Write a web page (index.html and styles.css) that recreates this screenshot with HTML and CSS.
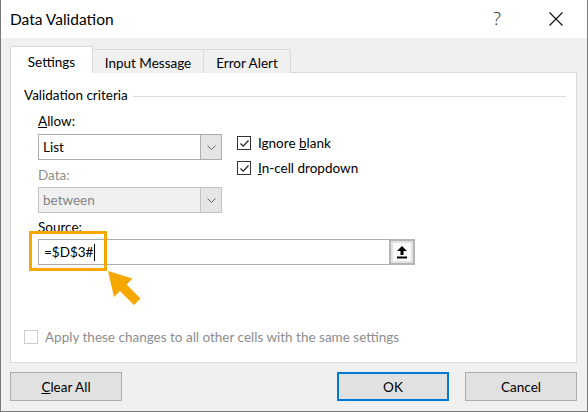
FILE: index.html
```html
<!DOCTYPE html>
<html lang="en">
<head>
<meta charset="UTF-8">
<meta name="viewport" content="width=device-width, initial-scale=1.0">
<title>Data Validation</title>
<link rel="stylesheet" href="styles.css">
</head>
<body>

<div class="dialog">
    <div class="titlebar">
        <span class="title">Data Validation</span>
        <span class="help">?</span>
        <span class="close">
            <svg width="14" height="14" viewBox="0 0 14 14"><path d="M0.5 0.5L13.5 13.5M13.5 0.5L0.5 13.5" stroke="#111" stroke-width="1.2"/></svg>
        </span>
    </div>

    <div class="body">
        <div class="tabs">
            <div class="tab active">Settings</div>
            <div class="tab">Input Message</div>
            <div class="tab">Error Alert</div>
        </div>

        <div class="panel">
            <div class="group-title"><span>Validation criteria</span><span class="rule"></span></div>

            <div class="criteria">
                <div class="left">
                    <div class="label"><u>A</u>llow:</div>
                    <div class="combo">
                        <span class="value">List</span>
                        <span class="drop"><svg width="9" height="5" viewBox="0 0 9 5"><path d="M0.5 0.5L4.5 4.5L8.5 0.5" fill="none" stroke="#606060"/></svg></span>
                    </div>
                    <div class="label disabled">Data:</div>
                    <div class="combo disabled">
                        <span class="value">between</span>
                        <span class="drop"><svg width="9" height="5" viewBox="0 0 9 5"><path d="M0.5 0.5L4.5 4.5L8.5 0.5" fill="none" stroke="#606060"/></svg></span>
                    </div>
                </div>
                <div class="right">
                    <div class="check">
                        <span class="box"><svg width="11" height="11" viewBox="0 0 11 11"><path d="M1.5 5.5L4.2 8.2L9.5 2.5" fill="none" stroke="#222" stroke-width="1.2"/></svg></span>
                        <span>Ignore <u>b</u>lank</span>
                    </div>
                    <div class="check">
                        <span class="box"><svg width="11" height="11" viewBox="0 0 11 11"><path d="M1.5 5.5L4.2 8.2L9.5 2.5" fill="none" stroke="#222" stroke-width="1.2"/></svg></span>
                        <span><u>I</u>n-cell dropdown</span>
                    </div>
                </div>
            </div>

            <div class="source-block">
                <div class="label"><u>S</u>ource:</div>
                <div class="source">
                    <div class="source-input">=$D$3#<span class="caret"></span></div>
                    <div class="collapse">
                        <svg width="12" height="13" viewBox="0 0 12 13"><path d="M6 0L11 5H7.5V9H4.5V5H1Z" fill="#000"/><rect x="1" y="10.5" width="10" height="2" fill="#000"/></svg>
                    </div>
                </div>
                <!-- callout around the formula -->
                <div class="callout"></div>
                <svg class="pointer" width="40" height="40" viewBox="0 0 40 40">
                    <path d="M1 1L7 27L13 21L27 35L33.5 28.5L19.5 14.5L25.5 8.5Z" fill="#f7a800"/>
                </svg>
            </div>

            <div class="check apply">
                <span class="box off"></span>
                <span>Apply these changes to all other cells with the same settings</span>
            </div>
        </div>

        <div class="buttons">
            <button class="btn"><u>C</u>lear All</button>
            <span class="spacer"></span>
            <button class="btn default">OK</button>
            <button class="btn">Cancel</button>
        </div>
    </div>
</div>

</body>
</html>
```

FILE: styles.css
```css
body {
    margin: 0;
    font-family: Lato, "Liberation Sans", sans-serif;
    font-size: 13.5px;
    color: #000;
}
.dialog {
    width: 588px;
    height: 412px;
    box-sizing: border-box;
    border: 1px solid #7a7a7a;
    border-top: none;
    background-color: #f0f0f0;
    display: flex;
    flex-direction: column;
}
.titlebar {
    height: 38px;
    background-color: #fff;
    display: flex;
    align-items: center;
    padding-left: 9px;
}
.title {
    font-size: 15.5px;
    flex: 1;
}
.help {
    font-family: "Open Sans", sans-serif;
    font-size: 18px;
    font-weight: 300;
    width: 60px;
    text-align: center;
    color: #222;
    margin-top: -2px;
}
.close {
    width: 58px;
    display: flex;
    justify-content: center;
    margin-right: 2px;
}
.body {
    padding: 9px 10px 0 9px;
}
.tabs {
    display: flex;
    align-items: flex-end;
    height: 26px;
    position: relative;
    z-index: 1;
    margin-bottom: -1px;
}
.tab {
    height: 24px;
    box-sizing: border-box;
    border: 1px solid #d9d9d9;
    border-bottom: none;
    border-left: none;
    display: flex;
    align-items: center;
    justify-content: center;
    background-color: #f0f0f0;
    padding-top: 3px;
}
.tab:nth-child(1) { width: 83px; }
.tab:nth-child(2) { width: 111px; }
.tab:nth-child(3) { width: 87px; }
.tab.active {
    height: 27px;
    background-color: #fff;
    border-left: 1px solid #d9d9d9;
    padding-top: 3px;
}
.panel {
    background-color: #fff;
    border: 1px solid #d9d9d9;
    height: 291px;
    box-sizing: border-box;
    padding: 13px 10px 0 13px;
}
.group-title {
    display: flex;
    align-items: center;
    line-height: 18px;
}
.rule {
    flex: 1;
    height: 1px;
    background-color: #dcdcdc;
    margin-left: 5px;
    margin-top: 2px;
}
.criteria {
    display: flex;
    margin-top: 8px;
    padding-left: 14px;
}
.left {
    width: 184px;
}
.label {
    line-height: 18px;
}
.label.disabled {
    color: #8d8d8d;
    margin-top: 6px;
}
.combo {
    height: 26px;
    box-sizing: border-box;
    border: 1px solid #adadad;
    display: flex;
    margin-top: 4px;
}
.combo .value {
    flex: 1;
    padding-left: 4px;
    display: flex;
    align-items: center;
}
.combo .drop {
    width: 20px;
    background-color: #e5e5e5;
    border-left: 1px solid #adadad;
    display: flex;
    align-items: center;
    justify-content: center;
}
.combo.disabled {
    background-color: #f0f0f0;
    border-color: #c2c2c2;
    color: #838383;
    margin-top: 3px;
}
.combo.disabled .drop {
    border-left-color: #c2c2c2;
}
.right {
    padding-top: 22px;
    padding-left: 15px;
}
.check {
    display: flex;
    align-items: center;
    gap: 7px;
    line-height: 18px;
}
.right .check + .check {
    margin-top: 7px;
}
.box {
    width: 14px;
    height: 14px;
    box-sizing: border-box;
    border: 1px solid #333;
    background-color: #fff;
    display: flex;
    align-items: center;
    justify-content: center;
}
.box.off {
    border-color: #cccccc;
}
.source-block {
    position: relative;
    margin-top: 5px;
    padding-left: 14px;
}
.source {
    display: flex;
    width: 377px;
    height: 26px;
    margin-top: 3px;
}
.source-input {
    flex: 1;
    border: 1px solid #adadad;
    border-right: none;
    display: flex;
    align-items: center;
    padding-left: 5px;
}
.caret {
    width: 1px;
    height: 17px;
    background-color: #000;
    margin-left: 1px;
}
.collapse {
    width: 26px;
    box-sizing: border-box;
    border: 2px solid #b5b5b5;
    box-shadow: inset 0 0 0 2px #e3e3e3;
    background-color: #fafafa;
    display: flex;
    align-items: center;
    justify-content: center;
}
.callout {
    position: absolute;
    left: 5px;
    top: 13px;
    width: 78px;
    height: 40px;
    box-sizing: border-box;
    border: 3px solid #f7a800;
}
.pointer {
    position: absolute;
    left: 83px;
    top: 52px;
}
.apply {
    margin-top: 63px;
    color: #8d8d8d;
}
.buttons {
    display: flex;
    gap: 16px;
    margin-top: 9px;
}
.spacer {
    flex: 1;
}
.btn {
    width: 112px;
    height: 29px;
    font-family: inherit;
    font-size: 13.5px;
    background-color: #e1e1e1;
    border: 1px solid #adadad;
    padding: 0;
}
.btn.default {
    border: 2px solid #0078d7;
}
```
